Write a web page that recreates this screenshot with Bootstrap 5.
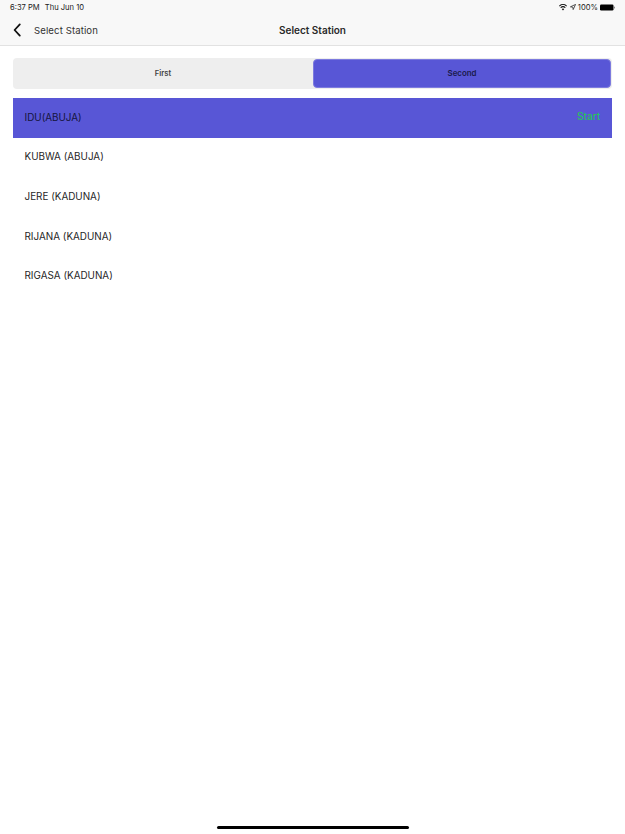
<!DOCTYPE html>
<html lang="en">
<head>
<meta charset="utf-8">
<title>Select Station</title>
<link rel="stylesheet" href="https://cdn.jsdelivr.net/npm/bootstrap@5.3.0/dist/css/bootstrap.min.css">
<style>
html, body { height: 100%; }
body { font-family: Inter, "Liberation Sans", sans-serif; background: #fff; color: #222; overflow: hidden; }
.screen { height: 834px; }
.topbar { height: 46px; background: #f8f8f8; border-bottom: 1px solid #e2e2e2; }
.status-row { height: 15px; padding: 0 9px 0 10px; font-size: 7.6px; color: #222; }
.status-left { gap: 5px; }
.st-wifi { margin-right: 3px; }
.st-loc { margin-right: 2px; }
.st-pct { margin-right: 2px; }
.nav-row { height: 30px; padding-left: 12px; position: relative; }
.back-title { font-size: 9.6px; color: #333; margin-left: 12px; margin-top: 2px; letter-spacing: .1px; }
.main-title { font-size: 10px; font-weight: 600; color: #2a2a2a; position: absolute; left: 0; right: 0; text-align: center; top: 8px; }
.seg { margin: 12px 13px 0 13px; height: 31px; background: #eeeeee; border-radius: 4px; }
.seg-item { font-size: 7.6px; font-weight: 600; color: #444; border-radius: 4px; }
.seg-first { width: 300px; }
.seg-on { flex: 1 1 0; background: #5856d6; color: #1a1a4a; border: 1px solid #7d7bdf; margin: 1px 1px 1px 0; font-size: 7.9px; }
.stations { margin: 9px 13px 0 12.5px; }
.station { height: 39.7px; padding: 0 12px 1.5px; font-size: 9.9px; color: #1f1f1f; }
.station-on { background: #5856d6; color: #14143c; }
.start { color: #1fd14e; font-size: 10.2px; }
.home-bar { width: 192px; height: 3px; background: #000; border-radius: 2px; margin: 0 auto 5px; }
</style>
</head>
<body>
<div class="screen d-flex flex-column">
  <header class="topbar">
    <div class="status-row d-flex align-items-center justify-content-between">
      <div class="status-left d-flex"><span>6:37 PM</span><span>Thu Jun 10</span></div>
      <div class="d-flex align-items-center">
        <svg class="st-wifi" width="8" height="7" viewBox="0 0 18 14" aria-label="wifi"><path d="M9 13.5 6.2 10.2a4.3 4.3 0 0 1 5.6 0zM4.6 8.3 2.9 6.3a9.4 9.4 0 0 1 12.2 0l-1.7 2a6.7 6.7 0 0 0-8.8 0zM1.4 4.6 0 2.8a13.8 13.8 0 0 1 18 0l-1.4 1.8a11.2 11.2 0 0 0-15.2 0z" fill="#111"/></svg>
        <svg class="st-loc" width="6" height="6" viewBox="0 0 14 14" aria-label="location"><path d="M13 1 1 6.6l5.6.8.8 5.6z" fill="none" stroke="#222" stroke-width="1.8" stroke-linejoin="round"/></svg>
        <span class="st-pct">100%</span>
        <svg width="16" height="7" viewBox="0 0 32 14" aria-label="battery"><rect x="0" y="1" width="27" height="12" rx="2.5" fill="#000"/><rect x="28" y="5" width="2" height="4" rx="1" fill="#888"/></svg>
      </div>
    </div>
    <div class="nav-row d-flex align-items-center">
      <svg width="10" height="14" viewBox="0 0 10 14" aria-label="back"><path d="M7.8 1.4 2.6 7l5.2 5.6" fill="none" stroke="#111" stroke-width="1.8" stroke-linecap="round" stroke-linejoin="round"/></svg>
      <span class="back-title">Select Station</span>
      <span class="main-title">Select Station</span>
    </div>
  </header>
  <div class="seg d-flex">
    <div class="seg-item seg-first d-flex align-items-center justify-content-center">First</div>
    <div class="seg-item seg-on d-flex align-items-center justify-content-center">Second</div>
  </div>
  <div class="stations d-flex flex-column">
    <div class="station station-on d-flex align-items-center justify-content-between"><span>IDU(ABUJA)</span><span class="start">Start</span></div>
    <div class="station d-flex align-items-center">KUBWA (ABUJA)</div>
    <div class="station d-flex align-items-center">JERE (KADUNA)</div>
    <div class="station d-flex align-items-center">RIJANA (KADUNA)</div>
    <div class="station d-flex align-items-center">RIGASA (KADUNA)</div>
  </div>
  <div class="mt-auto"><div class="home-bar"></div></div>
</div>
<script src="https://cdn.jsdelivr.net/npm/bootstrap@5.3.0/dist/js/bootstrap.bundle.min.js"></script>
</body>
</html>
